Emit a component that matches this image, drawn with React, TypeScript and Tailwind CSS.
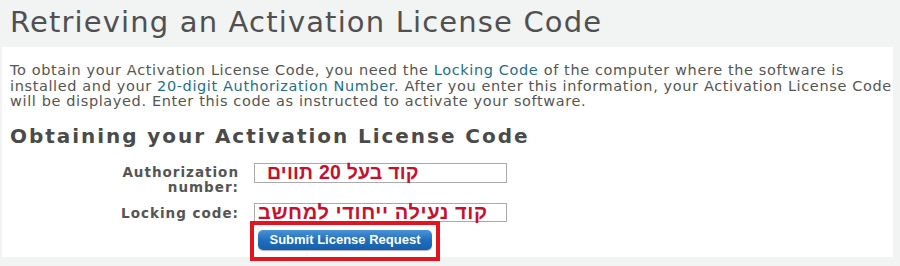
const App = () => {
  return (
    <div className="w-[900px] h-[266px] bg-[#f2f3f3] pl-[2px] pr-[7px] flex flex-col font-['DejaVu_Sans',sans-serif] text-[#4a4a4a]">
      {/* Title bar */}
      <div className="h-[47px] pl-[8px] flex items-center">
        <h1 className="text-[29px] leading-none tracking-[1.15px] text-[#505050] -mt-[2px]">
          Retrieving an Activation License Code
        </h1>
      </div>

      {/* Content */}
      <div className="h-[210px] bg-white px-[8px] pt-[16px]">
        <p className="text-[14.5px] leading-[15.5px] tracking-[0.62px] text-[#555] whitespace-nowrap">
          To obtain your Activation License Code, you need the{" "}
          <span className="text-[#1f6f8b]">Locking Code</span> of the computer
          where the software is
          <br />
          installed and your{" "}
          <span className="text-[#1f6f8b]">20-digit Authorization Number</span>.
          After you enter this information, your Activation License Code
          <br />
          will be displayed. Enter this code as instructed to activate your
          software.
        </p>

        <h2 className="mt-[15px] text-[20px] leading-[22px] tracking-[1.95px] font-bold text-[#4a4a4a]">
          Obtaining your Activation License Code
        </h2>

        <div className="mt-[16px] grid grid-cols-[229px_auto] gap-x-[15px] gap-y-[8px] items-start">
          <div className="text-right text-[13.5px] leading-[15px] tracking-[1px] font-bold text-[#555] pt-[2px]">
            Authorization
            <br />
            number:
          </div>
          <div className="w-[253px] h-[20px] border border-[#aaa] flex items-center pl-[12px]">
            <span
              dir="rtl"
              className="font-['Liberation_Sans',sans-serif] font-bold text-[19.5px] tracking-[0.2px] leading-none text-[#c8102e]"
            >
              קוד בעל 20 תווים
            </span>
          </div>

          <div className="text-right text-[13.5px] leading-[15px] tracking-[1px] font-bold text-[#555] pt-[3px]">
            Locking code:
          </div>
          <div className="flex flex-col items-start">
            <div className="w-[253px] h-[19px] border border-[#aaa] flex items-center pl-[3px]">
              <span
                dir="rtl"
                className="font-['Liberation_Sans',sans-serif] font-bold text-[20px] tracking-[0.6px] leading-none text-[#c8102e]"
              >
                קוד נעילה ייחודי למחשב
              </span>
            </div>
            <div className="-ml-[4px] -mt-[1px] border-[4px] border-[#e3141f] w-[190px] h-[40px] flex items-start pl-[4px] pt-[5px]">
              <button className="w-[174px] h-[20px] rounded-[5px] bg-gradient-to-b from-[#4a93d4] via-[#1f6fbf] to-[#165ea8] text-white text-[13px] font-bold font-['Liberation_Sans',sans-serif] shadow-[0_1px_1px_rgba(0,0,0,0.3)]">
                Submit License Request
              </button>
            </div>
          </div>
        </div>
      </div>
    </div>
  );
};

export default App;
